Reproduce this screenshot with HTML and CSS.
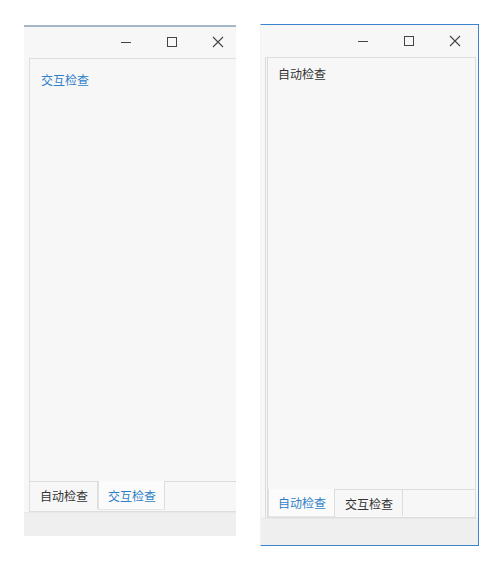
FILE: index.html
```html
<!DOCTYPE html>
<html lang="zh-CN">
<head>
<meta charset="utf-8">
<title>检查窗口</title>
<link rel="stylesheet" href="styles.css">
</head>
<body>
<div class="desk">
  <div class="clip clip-a">
    <div class="win win-a">
      <div class="titlebar">
        <span class="btn"><svg width="12" height="12" viewBox="0 0 12 12"><path d="M1 6.5h10" stroke="#444" stroke-width="1"/></svg></span>
        <span class="btn"><svg width="12" height="12" viewBox="0 0 12 12"><rect x="1.5" y="1.5" width="9" height="9" fill="none" stroke="#444" stroke-width="1"/></svg></span>
        <span class="btn"><svg width="12" height="12" viewBox="0 0 12 12"><path d="M1 1L11 11M11 1L1 11" stroke="#444" stroke-width="1.1"/></svg></span>
      </div>
      <div class="panel">
        <div class="content content-a"><span class="blue">交互检查</span></div>
        <div class="tabs">
          <span class="tab">自动检查</span>
          <span class="tab tab-on">交互检查</span>
        </div>
      </div>
      <div class="status"></div>
    </div>
  </div>

  <div class="win win-b">
    <div class="titlebar">
      <span class="btn"><svg width="12" height="12" viewBox="0 0 12 12"><path d="M1 6.5h10" stroke="#444" stroke-width="1"/></svg></span>
      <span class="btn"><svg width="12" height="12" viewBox="0 0 12 12"><rect x="1.5" y="1.5" width="9" height="9" fill="none" stroke="#444" stroke-width="1"/></svg></span>
      <span class="btn"><svg width="12" height="12" viewBox="0 0 12 12"><path d="M1 1L11 11M11 1L1 11" stroke="#444" stroke-width="1.1"/></svg></span>
    </div>
    <div class="panel">
      <div class="content content-b"><span>自动检查</span></div>
      <div class="tabs">
        <span class="tab tab-on">自动检查</span>
        <span class="tab">交互检查</span>
      </div>
    </div>
    <div class="status"></div>
  </div>
</div>
</body>
</html>
```

FILE: styles.css
```css
html, body {
  margin: 0;
  padding: 0;
  background: #ffffff;
}
body {
  font-family: "Noto Sans CJK SC", "Noto Sans", sans-serif;
  font-size: 12px;
  color: #333333;
}
.desk {
  position: relative;
  width: 503px;
  height: 570px;
  overflow: hidden;
}
.clip {
  position: absolute;
  overflow: hidden;
}
.clip-a {
  left: 24px;
  top: 25px;
  width: 212px;
  height: 511px;
}
.win {
  box-sizing: border-box;
  background: #f7f7f7;
  display: flex;
  flex-direction: column;
}
.win-a {
  width: 217px;
  height: 511px;
  border-top: 2px solid #a3b7c9;
}
.win-b {
  position: absolute;
  left: 260px;
  top: 24px;
  width: 219px;
  height: 522px;
  border: 1px solid #3d84cf;
  border-left: 1px solid #f3f3f3;
}
.titlebar {
  display: flex;
  justify-content: flex-end;
  align-items: center;
  flex: none;
}
.win-a .titlebar {
  height: 31px;
  padding-bottom: 2px;
  box-sizing: border-box;
}
.win-b .titlebar {
  height: 32px;
}
.btn {
  width: 46px;
  height: 28px;
  display: flex;
  align-items: center;
  justify-content: center;
}
.panel {
  flex: 1;
  display: flex;
  flex-direction: column;
  border: 1px solid #dedede;
  background: #f7f7f7;
}
.win-a .panel {
  margin-left: 5px;
  padding-bottom: 2px;
}
.win-b .panel {
  margin: 0 2px 0 4px;
  padding: 0 0 1px 0;
  border-left: 3px double #dcdcdc;
}
.content {
  flex: 1;
  line-height: 16px;
}
.content-a {
  padding: 13px 11px;
}
.content-b {
  padding: 8px 10px;
}
.blue, .tab-on {
  color: #2f7fc8;
}
.tabs {
  display: flex;
  height: 28px;
  border-top: 1px solid #dcdcdc;
  box-sizing: border-box;
}
.win-b .tabs {
  height: 27px;
}
.tab {
  display: flex;
  align-items: center;
  padding: 0 9px 0 10px;
  border-right: 1px solid #dcdcdc;
  color: #333333;
}
.tab.tab-on {
  color: #2f7fc8;
  background: #fbfbfb;
  margin-top: -1px;
  border-left: 1px solid #e2e2e2;
  border-bottom: 1px solid #e6e6e6;
  margin-bottom: -1px;
  padding: 0 8px 0 9px;
}
.status {
  flex: none;
  background: #efefef;
  border-top: 1px solid #e8e8e8;
}
.win-a .status {
  height: 23px;
}
.win-b .status {
  height: 26px;
}
```
